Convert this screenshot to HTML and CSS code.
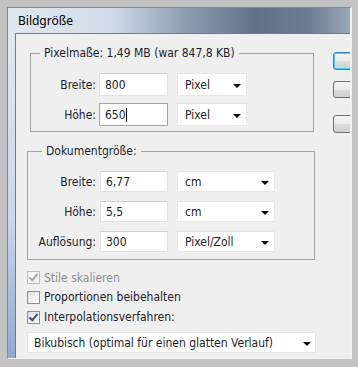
FILE: index.html
```html
<!DOCTYPE html>
<html lang="de">
<head>
  <meta charset="UTF-8">
  <title>Bildgröße</title>
  <link rel="stylesheet" href="styles.css">
</head>
<body>
  <div class="frame">
    <div class="window">
      <div class="titlebar">Bildgröße</div>
      <div class="client">
        <div class="main">
          <fieldset class="group group-pixel">
            <legend>Pixelmaße: 1,49 MB (war 847,8 KB)</legend>
            <div class="row">
              <span class="label">Breite:</span>
              <span class="field">800</span>
              <span class="select">Pixel</span>
            </div>
            <div class="row">
              <span class="label">Höhe:</span>
              <span class="field focused">650<span class="caret"></span></span>
              <span class="select">Pixel</span>
            </div>
          </fieldset>

          <fieldset class="group group-doc">
            <legend>Dokumentgröße:</legend>
            <div class="row">
              <span class="label">Breite:</span>
              <span class="field">6,77</span>
              <span class="select">cm</span>
            </div>
            <div class="row">
              <span class="label">Höhe:</span>
              <span class="field">5,5</span>
              <span class="select">cm</span>
            </div>
            <div class="row">
              <span class="label">Auflösung:</span>
              <span class="field">300</span>
              <span class="select">Pixel/Zoll</span>
            </div>
          </fieldset>

          <div class="checks">
            <label class="check disabled"><span class="box checked"></span>Stile skalieren</label>
            <label class="check"><span class="box"></span>Proportionen beibehalten</label>
            <label class="check"><span class="box checked"></span>Interpolationsverfahren:</label>
          </div>

          <span class="select wide">Bikubisch (optimal für einen glatten Verlauf)</span>
        </div>

        <!-- Schaltflächen sind am Fensterrand abgeschnitten -->
        <div class="buttons">
          <button class="btn default" aria-label="OK"></button>
          <button class="btn cancel" aria-label="Abbrechen"></button>
          <button class="btn auto" aria-label="Auto"></button>
        </div>
      </div>
    </div>
  </div>
</body>
</html>
```

FILE: styles.css
```css
body {
  margin: 0;
  font-family: "DejaVu Sans Condensed", "DejaVu Sans", sans-serif;
  font-size: 12px;
  color: #1c1c2c;
}

.frame {
  width: 358px;
  height: 367px;
  box-sizing: border-box;
  padding: 7px 6px 10px 7px;
  background-color: #c2c2c2;
}

.window {
  height: 100%;
  display: flex;
  flex-direction: column;
  overflow: hidden;
  border-top: 1px solid #8c8c8c;
  border-left: 1px solid #8c8c8c;
  border-right: 2px solid #f2f2f2;
  border-bottom: 1px solid #f6f6f6;
  background: linear-gradient(to bottom, #e3eaf3, #c9d7ea 60%, #8eaad2);
}

.titlebar {
  height: 25px;
  flex: none;
  padding-left: 10px;
  line-height: 25px;
  font-family: "Noto Sans", sans-serif;
  font-size: 12px;
  color: #000000;
  background: linear-gradient(to right, #dfe7f0 0%, #d2dce8 30%, #8c9cb1 52%, #627389 72%, #6b7c93 88%, #9aa7b8 100%);
}

.client {
  flex: 1;
  display: flex;
  margin-left: 7px;
  border-top: 1px solid #6f7c8e;
  border-left: 1px solid #6f7c8e;
  background-color: #efefef;
}

.main {
  width: 317px;
  flex: none;
  padding-left: 11px;
  box-sizing: border-box;
}

/* Gruppen */
.group {
  margin: 12px 0 0 0;
  padding: 0;
  border: 1px solid #a3a3a3;
  min-width: 0;
}

.group legend {
  padding: 0 4px;
  line-height: 14px;
}

.group-pixel {
  margin-left: 3px;
  width: 284px;
  box-sizing: border-box;
  padding: 13px 0 5px 0;
}

.group-pixel legend {
  margin-left: 9px;
}

.group-doc {
  width: 288px;
  box-sizing: border-box;
  padding: 13px 0 7px 0;
}

.group-doc legend {
  margin-left: 14px;
}

.row {
  display: flex;
  align-items: center;
}

.group-pixel .row {
  height: 23px;
}

.group-pixel .row + .row {
  margin-top: 7px;
}

.group-doc .row {
  height: 21px;
}

.group-doc .row + .row {
  margin-top: 9px;
}

.label {
  text-align: right;
  flex: none;
}

.group-pixel .label {
  width: 65px;
  margin-right: 3px;
}

.group-doc .label {
  width: 68px;
  margin-right: 4px;
}

.field {
  height: 100%;
  box-sizing: border-box;
  display: flex;
  align-items: center;
  padding-left: 5px;
  background-color: #ffffff;
  border: 1px solid #e2e2e2;
  border-top-color: #d0d0d0;
  width: 69px;
}

.group-doc .field {
  width: 68px;
}

.field.focused {
  border-color: #7aaee0;
}

.caret {
  display: inline-block;
  width: 1px;
  height: 14px;
  background-color: #000000;
}

.select {
  position: relative;
  height: 100%;
  box-sizing: border-box;
  display: flex;
  align-items: center;
  padding-left: 7px;
  margin-left: 9px;
  background-color: #ffffff;
  border: 1px solid #e6e6e6;
  width: 70px;
}

.group-doc .select {
  width: 98px;
}

.select::after {
  content: "";
  position: absolute;
  right: 5px;
  top: 50%;
  margin-top: -1px;
  border-left: 4px solid transparent;
  border-right: 4px solid transparent;
  border-top: 4px solid #000000;
}

.select.wide {
  width: 289px;
  height: 21px;
  margin: 5px 0 0 0;
  padding-left: 6px;
}

.select.wide::after {
  right: 4px;
}

/* Checkboxen */
.checks {
  margin-top: 8px;
}

.check {
  display: flex;
  align-items: center;
  height: 19px;
  gap: 4px;
}

.check + .check {
  height: 20px;
}

.check.disabled {
  color: #8c8c8c;
}

.box {
  position: relative;
  width: 13px;
  height: 13px;
  box-sizing: border-box;
  border: 1px solid #8e8f8f;
  background: linear-gradient(135deg, #dcdcdc, #ffffff);
}

.disabled .box {
  border-color: #bdbdbd;
  background: #f4f4f4;
}

.box.checked::after {
  content: "";
  position: absolute;
  left: 3px;
  top: 0px;
  width: 3px;
  height: 7px;
  border-right: 2px solid #3a4f8a;
  border-bottom: 2px solid #3a4f8a;
  transform: rotate(40deg);
}

.disabled .box.checked::after {
  border-color: #a8a8a8;
}

/* Schaltflächen */
.buttons {
  display: flex;
  flex-direction: column;
  padding-top: 18px;
}

.btn {
  width: 80px;
  height: 18px;
  padding: 0;
  border: 1px solid #707070;
  border-radius: 3px;
  background: linear-gradient(to bottom, #f3f3f3, #ebebeb 50%, #dddddd 51%, #cfcfcf);
}

.btn.default {
  border-color: #3c7fb1;
  box-shadow: inset 0 0 0 1px #48d4fd;
}

.btn.cancel {
  margin-top: 11px;
  height: 17px;
}

.btn.auto {
  margin-top: 17px;
}
```
